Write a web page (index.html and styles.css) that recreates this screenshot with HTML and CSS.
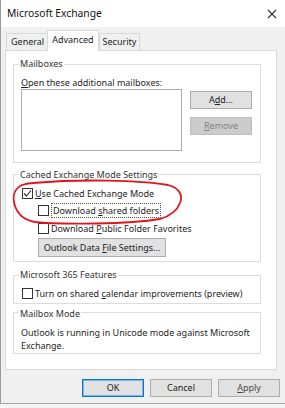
FILE: index.html
```html
<!DOCTYPE html>
<html lang="en">
<head>
    <meta charset="UTF-8">
    <meta name="viewport" content="width=device-width, initial-scale=1.0">
    <title>Microsoft Exchange</title>
    <link rel="stylesheet" href="styles.css">
</head>
<body>
    <div class="window">
        <div class="titlebar">
            <span class="title">Microsoft Exchange</span>
            <svg class="close" width="10" height="10" viewBox="0 0 10 10">
                <path d="M1 1 L9 9 M9 1 L1 9" stroke="#333" stroke-width="1.1" fill="none"/>
            </svg>
        </div>
        <div class="client">
            <div class="tabs">
                <div class="tab">General</div>
                <div class="tab active">Advanced</div>
                <div class="tab">Security</div>
            </div>
            <div class="panel">
                <!-- Mailboxes -->
                <div class="group g-mailboxes">
                    <div class="group-title">Mailboxes</div>
                    <div class="line open-label"><u>O</u>pen these additional mailboxes:</div>
                    <div class="mailbox-row">
                        <div class="listbox"></div>
                        <div class="side-buttons">
                            <button class="btn">A<u>d</u>d...</button>
                            <button class="btn" disabled><u>R</u>emove</button>
                        </div>
                    </div>
                </div>

                <!-- Cached Exchange Mode -->
                <div class="group g-cached">
                    <div class="group-title">Cached Exchange Mode Settings</div>
                    <label class="check row-use">
                        <span class="box checked">
                            <svg width="9" height="9" viewBox="0 0 9 9"><path d="M1 4.5 L3.5 7 L8 1.5" stroke="#222" stroke-width="1.1" fill="none"/></svg>
                        </span>
                        <span><u>U</u>se Cached Exchange Mode</span>
                    </label>
                    <label class="check sub row-shared">
                        <span class="box"></span>
                        <span class="focus">Download <u>s</u>hared folders</span>
                    </label>
                    <label class="check sub row-public">
                        <span class="box"></span>
                        <span>Download <u>P</u>ublic Folder Favorites</span>
                    </label>
                    <button class="btn btn-datafile">Outlook Data <u>F</u>ile Settings...</button>
                </div>

                <!-- Microsoft 365 -->
                <div class="group g-365">
                    <div class="group-title">Microsoft 365 Features</div>
                    <label class="check row-calendar">
                        <span class="box"></span>
                        <span>Turn on shared <u>c</u>alendar improvements (preview)</span>
                    </label>
                </div>

                <!-- Mailbox Mode -->
                <div class="group g-mode">
                    <div class="group-title">Mailbox Mode</div>
                    <p class="mode-text">Outlook is running in Unicode mode against Microsoft Exchange.</p>
                </div>
            </div>
            <div class="actions">
                <button class="btn btn-ok">OK</button>
                <button class="btn">Cancel</button>
                <button class="btn btn-apply"><u>A</u>pply</button>
            </div>
        </div>

        <!-- hand-drawn highlight -->
        <svg class="markup" width="285" height="408" viewBox="0 0 285 408">
            <path d="M33 183 C80 179 140 180 168 185 C180 188 183 196 180 203 C177 211 170 216 160 219 C130 224 60 225 35 222 C24 220 18 215 15 206 C12 197 14 189 22 185 C25 184 29 183 34 183"
                  stroke="#e3131b" stroke-width="1.8" fill="none" stroke-linecap="round"/>
        </svg>
    </div>
</body>
</html>
```

FILE: styles.css
```css
/* Base */
html, body {
    margin: 0;
    padding: 0;
}
body {
    width: 285px;
    height: 408px;
    background: #f4f4f4;
    font-family: "Noto Sans", "Open Sans", sans-serif;
    font-size: 9px;
    line-height: 13px;
    color: #1e1e1e;
    overflow: hidden;
}
u {
    text-decoration: underline;
    text-underline-offset: 1px;
}

/* Window frame */
.window {
    position: relative;
    width: 285px;
    height: 404px;
    box-sizing: border-box;
    border-left: 1px solid #9a9a9a;
    border-bottom: 1px solid #a6a6a6;
    display: flex;
    flex-direction: column;
}
.titlebar {
    height: 27px;
    background: #fff;
    display: flex;
    align-items: center;
    justify-content: space-between;
    padding: 0 8px 0 6px;
    flex-shrink: 0;
}
.title {
    font-size: 10.3px;
    color: #111;
}
.close {
    display: block;
}
.client {
    flex: 1;
    background: #f0f0f0;
    display: flex;
    flex-direction: column;
}

/* Tabs */
.tabs {
    display: flex;
    align-items: flex-end;
    height: 23px;
    padding-left: 5px;
}
.tab {
    height: 16px;
    line-height: 15px;
    padding: 0 3px;
    border: 1px solid #d9d9d9;
    border-bottom: none;
    background: #f0f0f0;
    color: #222;
    margin-right: -1px;
    box-sizing: content-box;
}
.tab:first-child {
    padding: 0 3px 0 4px;
}
.tab.active {
    height: 20px;
    line-height: 17px;
    padding: 0 4px;
    background: #fff;
    position: relative;
    z-index: 1;
    margin-bottom: -1px;
    margin-right: 0;
}

/* Panel */
.panel {
    background: #fff;
    border: 1px solid #d9d9d9;
    width: 272px;
    height: 320px;
    margin-left: 4px;
    box-sizing: border-box;
    padding: 13px 0 0 7px;
}

/* Group boxes */
.group {
    width: 248px;
    box-sizing: border-box;
    border: 1px solid #dcdcdc;
    padding: 0 0 0 7px;
}
.group-title {
    display: block;
    width: fit-content;
    height: 13px;
    line-height: 13px;
    background: #fff;
    padding: 0 1px;
    margin-left: -2px;
    color: #333;
}
.line {
    height: 13px;
    line-height: 13px;
}
.g-mailboxes .group-title { margin-top: -8px; }
.g-mailboxes { padding-bottom: 11px; }
.open-label { margin-top: 6px; }
.mailbox-row {
    display: flex;
    gap: 8px;
}
.listbox {
    width: 161px;
    height: 62px;
    box-sizing: border-box;
    border: 1px solid #adadad;
    background: #fff;
}
.side-buttons {
    display: flex;
    flex-direction: column;
    gap: 8px;
    padding-top: 2px;
}
.side-buttons .btn {
    width: 62px;
    height: 18px;
}

/* Buttons */
.btn {
    font-family: inherit;
    font-size: 9px;
    color: #222;
    background: #e1e1e1;
    border: 1px solid #adadad;
    padding: 0;
    box-sizing: border-box;
    line-height: 14px;
}
.btn:disabled {
    background: #cccccc;
    border-color: #bfbfbf;
    color: #838383;
}

/* Checkboxes */
.check {
    display: flex;
    align-items: center;
    height: 13px;
    line-height: 13px;
    gap: 2px;
    margin-left: 1px;
}
.check.sub {
    margin-left: 17px;
}
.box {
    width: 11px;
    height: 11px;
    box-sizing: border-box;
    border: 1px solid #333;
    background: #fff;
    display: flex;
    align-items: center;
    justify-content: center;
    flex-shrink: 0;
}
.focus {
    border: 1px dotted #555;
    padding: 0 1px;
    line-height: 13px;
}

.g-cached {
    margin-top: 11px;
    padding-bottom: 4px;
}
.g-cached .group-title { margin-top: -7px; }
.row-use { margin-top: 6px; }
.row-shared { margin-top: 4px; }
.row-public { margin-top: 5px; }
.btn-datafile {
    display: block;
    margin: 3px 0 0 17px;
    width: 128px;
    height: 19px;
}

.g-365 {
    margin-top: 13px;
    padding-bottom: 3px;
}
.g-365 .group-title { margin-top: -8px; }
.row-calendar { margin-top: 6px; }

.g-mode {
    margin-top: 8px;
    padding-bottom: 1px;
}
.g-mode .group-title { margin-top: -6px; }
.mode-text {
    margin: 6px 0 0;
    line-height: 13px;
    width: 236px;
}

/* Dialog buttons */
.actions {
    display: flex;
    justify-content: flex-end;
    gap: 6px;
    padding: 9px 5px 0 0;
}
.actions .btn {
    width: 62px;
    height: 18px;
}
.btn-ok {
    border-color: #0078d7;
    box-shadow: inset 0 0 0 1px #7fb4e6;
}
.btn-apply {
    color: #4a4a4a;
}

/* Red highlight drawn over the dialog */
.markup {
    position: absolute;
    top: 0;
    left: -1px;
    pointer-events: none;
}
```
